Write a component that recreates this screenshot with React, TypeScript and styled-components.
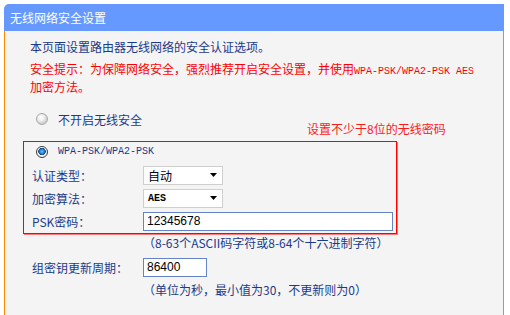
import React from "react";
import styled, { createGlobalStyle } from "styled-components";

const GlobalStyle = createGlobalStyle`
  html, body {
    margin: 0;
    padding: 0;
    background: #ffffff;
  }
  body {
    font-family: "Noto Sans CJK SC", "Liberation Sans", sans-serif;
    font-size: 12px;
  }
`;

const Page = styled.div`
  width: 510px;
  height: 315px;
  box-sizing: border-box;
  padding: 4px 0 0 4px;
  overflow: hidden;
`;

const Panel = styled.div`
  width: 500px;
`;

const Header = styled.div`
  height: 27px;
  line-height: 27px;
  padding-left: 6px;
  background: #6699ff;
  border-top-left-radius: 5px;
  color: #ffffff;
  font-size: 12px;
`;

const Body = styled.div`
  position: relative;
  min-height: 300px;
  padding: 7px 0 0 18px;
  background: #f4f4f4;
  border-left: 1px solid #ff8a00;
  border-right: 1px solid #ff8a00;
`;

const Intro = styled.div`
  margin-left: 7px;
  height: 18px;
  line-height: 18px;
  color: #1b3a8a;
`;

const Warning = styled.div`
  margin: 4px 0 0 7px;
  line-height: 18px;
  color: #ff0000;
`;

const Line = styled.div`
  height: 18px;
  overflow: visible;
`;

const Mono = styled.span`
  font-family: "Liberation Mono", "DejaVu Sans Mono", monospace;
  font-size: 10px;
  line-height: 1;
`;

const RadioRow = styled.div<{ $indent: number }>`
  display: flex;
  align-items: center;
  height: 18px;
  margin-left: ${(p) => p.$indent}px;
  gap: 10px;
  color: #1b3a8a;
`;

const Radio = styled.span<{ $checked?: boolean }>`
  width: 12px;
  height: 12px;
  flex: none;
  box-sizing: border-box;
  border-radius: 50%;
  border: 1px solid ${(p) => (p.$checked ? "#3a3a3a" : "#a8a8a8")};
  background: ${(p) =>
    p.$checked
      ? "radial-gradient(circle at 50% 45%, #6cc4ff 0, #1a78d0 2.5px, #0b3f8a 3.5px, #ffffff 4px, #e6e6e6 6px)"
      : "radial-gradient(circle at 40% 35%, #ffffff 0, #f0f0f0 3px, #cfcfcf 6px)"};
`;

const Annotation = styled.div`
  position: absolute;
  top: 89px;
  left: 302px;
  line-height: 18px;
  color: #ff1a1a;
  font-size: 12px;
`;

const FirstRadio = styled(RadioRow)`
  margin-top: 14px;
`;

const SecurityBox = styled.div`
  width: 374px;
  margin-top: 13px;
  padding: 1px 0 2px 8px;
  box-sizing: border-box;
  border: 1px solid #ff0000;
  box-shadow: 1px 1px 0 #ff7777;
  display: flex;
  flex-direction: column;
  gap: 3px;
`;

const BoxRadio = styled(RadioRow)`
  margin-bottom: 1px;
`;

const FieldRow = styled.div<{ $indent?: number; $top?: number }>`
  display: flex;
  align-items: center;
  height: 20px;
  margin-left: ${(p) => p.$indent ?? 0}px;
  margin-top: ${(p) => p.$top ?? 0}px;
`;

const Label = styled.span`
  width: 111px;
  flex: none;
  color: #1b3a8a;
`;

const SelectBox = styled.div`
  display: flex;
  align-items: center;
  justify-content: space-between;
  width: 80px;
  height: 19px;
  box-sizing: border-box;
  padding: 0 5px 0 4px;
  background: #ffffff;
  border: 1px solid #cfcfcf;
  color: #000000;
`;

const SelectText = styled.span<{ $mono?: boolean }>`
  font-family: ${(p) =>
    p.$mono ? '"Liberation Mono", monospace' : '"Noto Sans CJK SC", sans-serif'};
  font-size: ${(p) => (p.$mono ? "10px" : "12px")};
  font-weight: ${(p) => (p.$mono ? 700 : 400)};
`;

const TextInput = styled.div<{ $width: number }>`
  display: flex;
  align-items: center;
  width: ${(p) => p.$width}px;
  height: 19px;
  box-sizing: border-box;
  padding-left: 3px;
  background: #ffffff;
  border: 1px solid #6584c8;
  color: #000000;
  font-family: "Liberation Sans", sans-serif;
  font-size: 12px;
`;

const Hint = styled.div<{ $top?: number }>`
  height: 18px;
  margin: ${(p) => p.$top ?? 0}px 0 0 120px;
  line-height: 18px;
  color: #1b3a8a;
`;

function Arrow() {
  return (
    <svg width="7" height="4" viewBox="0 0 7 4">
      <path d="M0 0h7L3.5 4z" fill="#000" />
    </svg>
  );
}

function Select({ value, mono }: { value: string; mono?: boolean }) {
  return (
    <SelectBox>
      <SelectText $mono={mono}>{value}</SelectText>
      <Arrow />
    </SelectBox>
  );
}

export default function App() {
  return (
    <Page>
      <GlobalStyle />
      <Panel>
        <Header>无线网络安全设置</Header>
        <Body>
          <Intro>本页面设置路由器无线网络的安全认证选项。</Intro>
          <Warning>
            <Line>
              安全提示：为保障网络安全，强烈推荐开启安全设置，并使用<Mono>WPA-PSK/WPA2-PSK AES</Mono>
            </Line>
            <Line>加密方法。</Line>
          </Warning>

          <FirstRadio $indent={13}>
            <Radio />
            <span>不开启无线安全</span>
          </FirstRadio>

          <Annotation>设置不少于8位的无线密码</Annotation>

          <SecurityBox>
            <BoxRadio $indent={4}>
              <Radio $checked />
              <Mono>WPA-PSK/WPA2-PSK</Mono>
            </BoxRadio>
            <FieldRow>
              <Label>认证类型：</Label>
              <Select value="自动" />
            </FieldRow>
            <FieldRow>
              <Label>加密算法：</Label>
              <Select value="AES" mono />
            </FieldRow>
            <FieldRow>
              <Label>PSK密码：</Label>
              <TextInput $width={250}>12345678</TextInput>
            </FieldRow>
          </SecurityBox>

          <Hint>（8-63个ASCII码字符或8-64个十六进制字符）</Hint>

          <FieldRow $indent={9} $top={5}>
            <Label>组密钥更新周期：</Label>
            <TextInput $width={64}>86400</TextInput>
          </FieldRow>

          <Hint $top={4}>（单位为秒，最小值为30，不更新则为0）</Hint>
        </Body>
      </Panel>
    </Page>
  );
}
